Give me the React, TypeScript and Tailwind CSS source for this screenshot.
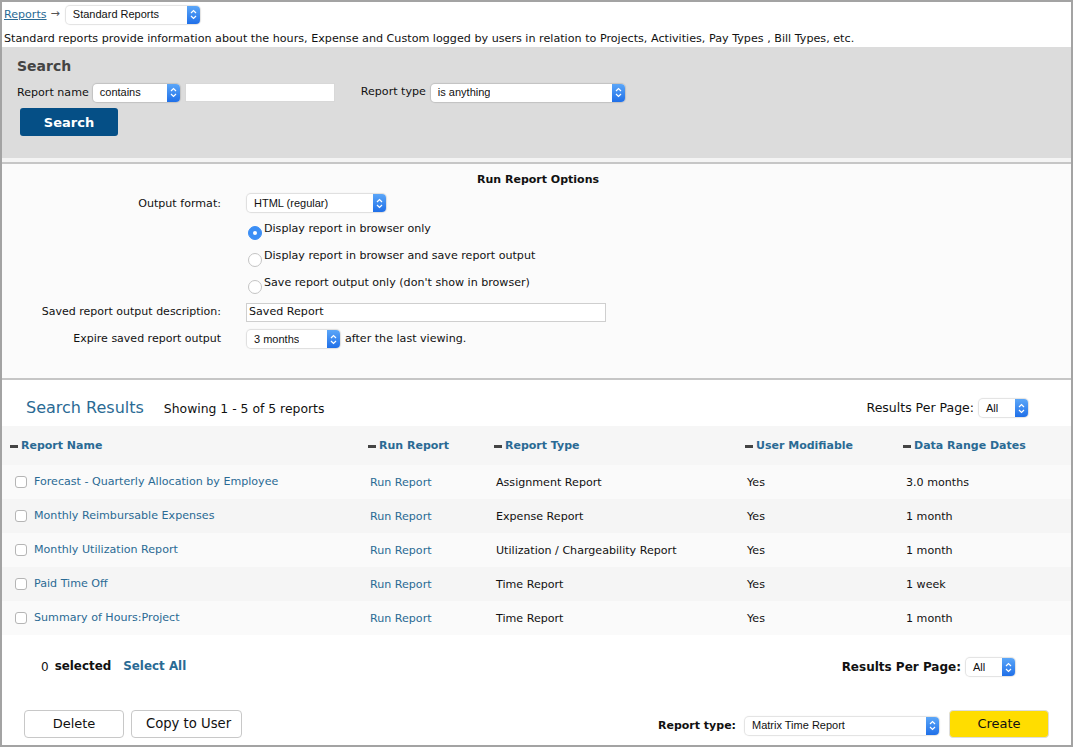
import React from 'react';

const verdana = "font-['DejaVu_Sans',Verdana,sans-serif]";
const helv = "font-['Liberation_Sans',Arial,sans-serif]";

const Select = ({ label, width, height = 18 }: { label: string; width: number; height?: number }) => (
  <div
    className={`${helv} flex shrink-0 items-center justify-between rounded-[4px] bg-white text-[11px] text-[#111] shadow-[0_0_1px_1px_rgba(0,0,0,0.12)]`}
    style={{ width, height }}
  >
    <span className="truncate pl-[7px]">{label}</span>
    <span className="flex h-full w-[13px] items-center justify-center rounded-r-[4px] bg-gradient-to-b from-[#5ba6f8] to-[#1f6fe8]">
      <svg width="7" height="11" viewBox="0 0 7 11" fill="none" stroke="white" strokeWidth="1.2">
        <path d="M1 4 3.5 1.5 6 4M1 7l2.5 2.5L6 7" />
      </svg>
    </span>
  </div>
);

const Radio = ({ on, label }: { on?: boolean; label: string }) => (
  <div className="flex h-[27px] items-start">
    <span
      className={`mt-[4px] mr-[2px] flex h-[14px] w-[14px] shrink-0 items-center justify-center rounded-full border ${
        on ? 'border-[#3b8ef5] bg-[#3b8ef5]' : 'border-[#c4c4c4] bg-white'
      }`}
    >
      {on && <span className="h-[4px] w-[4px] rounded-full bg-white" />}
    </span>
    <span className="leading-[14px]">{label}</span>
  </div>
);

const Heading = ({ label }: { label: string }) => (
  <div className="flex items-center gap-[3px] text-[11px] font-bold text-[#2a6a94]">
    <span className="h-[3px] w-[8px] bg-[#444]" />
    <span>{label}</span>
  </div>
);

const rows = [
  ['Forecast - Quarterly Allocation by Employee', 'Assignment Report', '3.0 months'],
  ['Monthly Reimbursable Expenses', 'Expense Report', '1 month'],
  ['Monthly Utilization Report', 'Utilization / Chargeability Report', '1 month'],
  ['Paid Time Off', 'Time Report', '1 week'],
  ['Summary of Hours:Project', 'Time Report', '1 month'],
];

const cols = 'grid grid-cols-[358px_126px_251px_158px_1fr]';

export default function App() {
  return (
    <div className={`${verdana} flex h-[747px] w-[1073px] flex-col overflow-hidden border-2 border-[#a3a3a3] bg-white text-[11.1px] text-[#111]`}>
      <div className="flex h-[25px] shrink-0 items-center pl-[2px]">
        <a className="pt-[1px] text-[#2a6a94] underline">Reports</a>
        <span className="ml-[4px] mr-[6px] text-[#555]">→</span>
        <Select label="Standard Reports" width={134} />
      </div>
      <div className="flex h-[20px] shrink-0 items-center pl-[2px] pt-[4px] text-[11.17px]">
        Standard reports provide information about the hours, Expense and Custom logged by users in relation to Projects, Activities, Pay Types , Bill Types, etc.
      </div>

      <div className="h-[111px] shrink-0 bg-[#dcdcdc] pl-[15px] pt-[11px]">
        <div className="h-[16px] text-[14px] font-bold leading-[16px] text-[#444]">Search</div>
        <div className="mt-[9px] flex h-[19px] items-center">
          <span className="mr-[4px] pt-[1px]">Report name</span>
          <Select label="contains" width={87} />
          <div className="ml-[5px] mr-[26px] h-[19px] w-[150px] border border-[#d8d8d8] bg-white" />
          <span className="mr-[5px]">Report type</span>
          <Select label="is anything" width={194} />
        </div>
        <button className="ml-[3px] mt-[6px] h-[28px] w-[98px] rounded-[3px] bg-[#054f86] pt-[1px] text-[13px] font-bold text-white">Search</button>
      </div>

      <div className="h-[4px] shrink-0 bg-[#f4f4f4]" />
      <div className="h-[2px] shrink-0 bg-[#c6c6c6]" />

      <div className="h-[214px] shrink-0 bg-[#fbfbfb]">
        <div className="flex h-[27px] items-center justify-center pl-[3px] pt-[5px] text-[11px] font-bold">Run Report Options</div>
        <div className="flex h-[24px] items-center">
          <div className="w-[219px] pt-[2px] text-right">Output format:</div>
          <div className="ml-[26px]"><Select label="HTML (regular)" width={139} /></div>
        </div>
        <div className="ml-[246px] mt-[7px]">
          <Radio on label="Display report in browser only" />
          <Radio label="Display report in browser and save report output" />
          <Radio label="Save report output only (don't show in browser)" />
        </div>
        <div className="-mt-[1px] flex h-[20px] items-center">
          <div className="w-[219px] text-right text-[11px]">Saved report output description:</div>
          <div className="ml-[25px] flex h-[19px] w-[360px] items-center border border-[#cfcfcf] bg-white pl-[2px]">Saved Report</div>
        </div>
        <div className="mt-[7px] flex h-[20px] items-center">
          <div className="w-[219px] text-right text-[11px]">Expire saved report output</div>
          <div className="ml-[26px]"><Select label="3 months" width={93} /></div>
          <span className="ml-[5px]">after the last viewing.</span>
        </div>
      </div>

      <div className="h-[2px] shrink-0 bg-[#c6c6c6]" />

      <div className="flex h-[46px] shrink-0 items-center pl-[24px] pr-[43px] pt-[10px]">
        <span className="text-[16px] text-[#2a6a94]">Search Results</span>
        <span className="ml-[20px] pt-[2px] text-[12.4px]">Showing 1 - 5 of 5 reports</span>
        <span className="ml-auto mr-[5px] text-[12.5px]">Results Per Page:</span>
        <Select label="All" width={49} />
      </div>

      <div className={`${cols} h-[39px] shrink-0 items-center bg-[#f6f6f6] pl-[8px] pt-[2px]`}>
        <Heading label="Report Name" />
        <Heading label="Run Report" />
        <Heading label="Report Type" />
        <Heading label="User Modifiable" />
        <Heading label="Data Range Dates" />
      </div>

      {rows.map((r, i) => (
        <div key={r[0]} className={`${cols} h-[34px] shrink-0 items-center pl-[8px] pt-[2px] ${i % 2 === 0 ? 'bg-[#fafafa]' : 'bg-[#f5f5f5]'}`}>
          <div className="flex items-center pl-[5px] text-[#2a6a94]">
            <span className="mr-[7px] -mt-[1px] h-[12px] w-[12px] rounded-[3px] border border-[#b5b5b5] bg-white" />
            <span className="-mt-[2px]">{r[0]}</span>
          </div>
          <div className="pl-[2px] text-[#2a6a94]">Run Report</div>
          <div className="pl-[2px]">{r[1]}</div>
          <div className="pl-[2px]">Yes</div>
          <div className="pl-[3px]">{r[2]}</div>
        </div>
      ))}

      <div className="flex h-[75px] shrink-0 items-center pb-[11px] pl-[39px] pr-[56px]">
        <span className="text-[12px]">0</span>
        <span className="ml-[6px] text-[11.9px] font-bold">selected</span>
        <span className="ml-[12px] text-[11.9px] font-bold text-[#2a6a94]">Select All</span>
        <span className="ml-auto mr-[5px] text-[12px] font-bold">Results Per Page:</span>
        <Select label="All" width={49} />
      </div>

      <div className="flex h-[28px] shrink-0 items-center pl-[22px] pr-[22px]">
        <button className="h-[28px] w-[100px] rounded-[4px] border border-[#c8c8c8] bg-white text-[13px]">Delete</button>
        <button className="ml-[7px] h-[28px] w-[111px] rounded-[4px] border border-[#c8c8c8] bg-white pl-[4px] text-[13.2px]">Copy to User</button>
        <span className="ml-auto mr-[9px] pt-[4px] text-[11px] font-bold">Report type:</span>
        <div className="pt-[3px]"><Select label="Matrix Time Report" width={194} /></div>
        <button className="ml-[10px] h-[28px] w-[100px] rounded-[4px] border border-[#ddd] bg-[#ffdd00] text-[13px]">Create</button>
      </div>
    </div>
  );
}
